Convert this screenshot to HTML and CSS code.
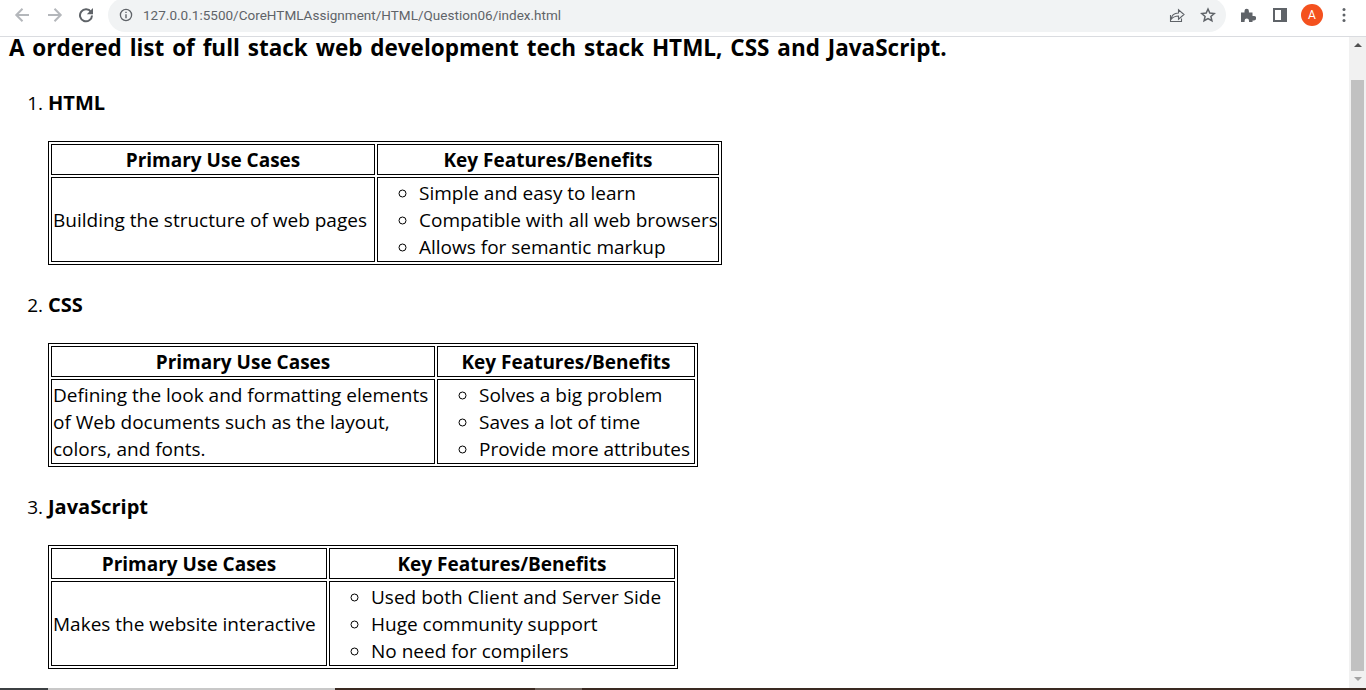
FILE: index.html
```html
<!DOCTYPE html>
<html>
	<head>
		<title>Question06</title>
		<link rel="stylesheet" href="styles.css">
	</head>
	<body>
		<div class="toolbar">
			<svg class="tool-icon nav-back" viewBox="0 0 16 16"><path d="M15 8H2.500M8.500 1.800 2.300 8l6.200 6.200" fill="none" stroke="#b4b7bb" stroke-width="2"/></svg>
			<svg class="tool-icon nav-forward" viewBox="0 0 16 16"><path d="M1 8h12.500M7.500 1.800 13.700 8l-6.200 6.200" fill="none" stroke="#b4b7bb" stroke-width="2"/></svg>
			<svg class="tool-icon nav-reload" viewBox="0 0 16 16"><path d="M13 5A6 6 0 1 0 14 8.500" fill="none" stroke="#5f6368" stroke-width="2"/><path d="M15 1v6.200H8.800z" fill="#5f6368"/></svg>
			<div class="omnibox">
				<svg class="info-icon" viewBox="0 0 14 14"><circle cx="7" cy="7" r="5.600" fill="none" stroke="#5f6368" stroke-width="1.300"/><path d="M7 6.200v4M7 3.800v1.300" stroke="#5f6368" stroke-width="1.400"/></svg>
				<span class="url">127.0.0.1:5500/CoreHTMLAssignment/HTML/Question06/index.html</span>
				<svg class="box-icon" viewBox="0 0 16 16"><path d="M1.500 8v6.500h11v-3M2 12.500c.5-4 3.500-6.500 7.500-6.500V2.800l5.500 4.700-5.500 4.700V9c-3 0-5.500 1-7.500 3.500z" fill="none" stroke="#5f6368" stroke-width="1.100"/></svg>
				<svg class="box-icon star" viewBox="0 0 16 16"><path d="M8 2l1.800 4.100 4.400.4-3.300 2.900 1 4.300L8 11.500l-3.900 2.200 1-4.300-3.300-2.900 4.400-.4z" fill="none" stroke="#5f6368" stroke-width="1.500"/></svg>
			</div>
			<svg class="ext-icon" viewBox="0 0 16 16"><path d="M1 5.500h3.500V4a2.200 2.200 0 0 1 4.400 0v1.500h3.600V9H14a2.200 2.200 0 0 1 0 4.400h-1.500V15H9v-1.200a2.200 2.200 0 0 0-4.400 0V15H1z" fill="#5f6368"/></svg>
			<svg class="side-icon" viewBox="0 0 14 14"><path d="M0 0h14v14H0zM2 2v10h6V2z" fill="#5f6368" fill-rule="evenodd"/></svg>
			<div class="avatar">A</div>
			<svg class="menu-icon" viewBox="0 0 4 16"><circle cx="2" cy="2.500" r="1.500" fill="#5f6368"/><circle cx="2" cy="8" r="1.500" fill="#5f6368"/><circle cx="2" cy="13.500" r="1.500" fill="#5f6368"/></svg>
		</div>
		<div class="viewport">
			<div class="page">
				<h2>A ordered list of full stack web development tech stack HTML, CSS and JavaScript.</h2>
				<ol>
					<li>
						<h3>HTML</h3>
						<table class="html-table">
							<tr><th class="c1">Primary Use Cases</th><th class="c2">Key Features/Benefits</th></tr>
							<tr>
								<td>Building the structure of web pages</td>
								<td>
									<ul>
										<li>Simple and easy to learn</li>
										<li>Compatible with all web browsers</li>
										<li>Allows for semantic markup</li>
									</ul>
								</td>
							</tr>
						</table>
					</li>
					<li>
						<h3>CSS</h3>
						<table class="css-table">
							<tr><th class="c1">Primary Use Cases</th><th class="c2">Key Features/Benefits</th></tr>
							<tr>
								<td>Defining the look and formatting elements<br>of Web documents such as the layout,<br>colors, and fonts.</td>
								<td>
									<ul>
										<li>Solves a big problem</li>
										<li>Saves a lot of time</li>
										<li>Provide more attributes</li>
									</ul>
								</td>
							</tr>
						</table>
					</li>
					<li>
						<h3>JavaScript</h3>
						<table class="js-table">
							<tr><th class="c1">Primary Use Cases</th><th class="c2">Key Features/Benefits</th></tr>
							<tr>
								<td>Makes the website interactive</td>
								<td>
									<ul>
										<li>Used both Client and Server Side</li>
										<li>Huge community support</li>
										<li>No need for compilers</li>
									</ul>
								</td>
							</tr>
						</table>
					</li>
				</ol>
			</div>
			<div class="scrollbar">
				<div class="arrow-up"></div>
				<div class="thumb"></div>
				<div class="arrow-down"></div>
			</div>
		</div>
		<div class="taskbar">
			<div class="strip-dark"></div>
			<div class="strip-light"></div>
			<div class="strip-brown"></div>
			<div class="strip-mid"></div>
		</div>
	</body>
</html>
```
FILE: styles.css
```css
*{
	box-sizing: border-box;
}
html, body{
	margin: 0;
	height: 100%;
	overflow: hidden;
	background: #fff;
}
body{
	display: flex;
	flex-direction: column;
	font-family: "Open Sans", sans-serif;
}
.toolbar{
	height: 37px;
	flex: none;
	display: flex;
	align-items: center;
	padding-bottom: 6px;
	background: #fff;
	border-bottom: 1px solid #dadce0;
}
.tool-icon{
	width: 16px;
	height: 16px;
	flex: none;
}
.nav-back{
	margin-left: 14px;
}
.nav-forward{
	margin-left: 17px;
}
.nav-reload{
	margin-left: 15px;
}
.omnibox{
	width: 1118px;
	height: 34px;
	margin-left: 14px;
	flex: none;
	display: flex;
	align-items: center;
	background: #f1f3f4;
	border-radius: 17px;
	padding: 0 10px 0 11px;
}
.info-icon{
	width: 14px;
	height: 14px;
	flex: none;
}
.url{
	margin-left: 10px;
	flex: 1;
	font: 13.500px "Roboto", sans-serif;
	letter-spacing: 0.02px;
	color: #5f6368;
}
.box-icon{
	width: 16px;
	height: 16px;
	margin-right: 15px;
	flex: none;
}
.box-icon.star{
	margin-right: 0;
}
.ext-icon{
	width: 16px;
	height: 16px;
	margin-left: 14px;
	flex: none;
}
.side-icon{
	width: 14px;
	height: 14px;
	margin-left: 17px;
	flex: none;
}
.avatar{
	width: 22px;
	height: 22px;
	margin-left: 14px;
	flex: none;
	border-radius: 50%;
	background: #f4511e;
	color: #fff;
	font: 12px/22px "Roboto", sans-serif;
	text-align: center;
}
.menu-icon{
	width: 4px;
	height: 16px;
	margin-left: 19px;
	flex: none;
}
.viewport{
	flex: 1;
	min-height: 0;
	display: flex;
}
.page{
	flex: 1;
	padding: 0 8px;
	color: #000;
}
h2{
	margin: 0;
	padding-left: 1px;
	font-size: 22.500px;
	line-height: 22px;
	height: 20px;
	word-spacing: 2px;
	white-space: nowrap;
}
ol{
	margin: 33px 0 0;
	padding-left: 40px;
	font-size: 19px;
}
ol > li{
	margin-bottom: 27px;
}
h3{
	margin: 0 0 26px;
	font-size: 20px;
	line-height: 25px;
}
table{
	border: 1px solid #000;
	border-spacing: 2px;
	table-layout: fixed;
	font-size: 19px;
	line-height: 27px;
}
th, td{
	border: 1px solid #000;
	padding: 2px 1px 0;
	white-space: nowrap;
}
.html-table{
	width: 674px;
}
.html-table .c1{
	width: 324px;
}
.css-table{
	width: 650px;
}
.css-table .c1{
	width: 384px;
}
.js-table{
	width: 630px;
}
.js-table .c1{
	width: 276px;
}
ul{
	margin: 0;
	padding-left: 40px;
	list-style-type: circle;
}
.scrollbar{
	width: 17px;
	flex: none;
	display: flex;
	flex-direction: column;
	align-items: center;
	background: #f1f1f1;
}
.arrow-up{
	margin-top: 6px;
	border: 4px solid transparent;
	border-top: 0;
	border-bottom: 4px solid #505050;
}
.thumb{
	width: 13px;
	margin-top: 33px;
	height: 591px;
	background: #c1c1c1;
}
.arrow-down{
	margin-top: 6px;
	border: 4px solid transparent;
	border-bottom: 0;
	border-top: 4px solid #a3a3a3;
}
.taskbar{
	height: 2px;
	flex: none;
	display: flex;
	background: #3a2a22;
}
.strip-dark{
	width: 48px;
	background: #3c4043;
}
.strip-light{
	width: 287px;
	background: #c8c8c8;
}
.strip-brown{
	width: 200px;
}
.strip-mid{
	width: 47px;
	background: #6b5f58;
}
```
